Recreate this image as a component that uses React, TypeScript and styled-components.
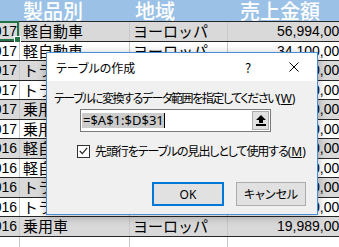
import React, { FC } from "react";
import styled, { createGlobalStyle } from "styled-components";

// Excel sheet with the "create table" dialog on top of it

const GlobalStyle = createGlobalStyle`
  html, body {
    margin: 0;
    padding: 0;
    background: #fff;
  }
  body {
    font-family: "Noto Sans CJK JP", sans-serif;
    color: #000;
  }
`;

const Screen = styled.div`
  position: relative;
  width: 339px;
  height: 247px;
  overflow: hidden;
  background: #fff;
`;

const Sheet = styled.div`
  margin-left: -40px;
  width: 390px;
`;

const COLS = "60px 110px 98px 122px";

const HeaderRow = styled.div`
  display: grid;
  grid-template-columns: ${COLS};
  height: 22px;
  box-sizing: border-box;
  background: #9bc2e6;
  border-bottom: 1px solid #262626;
`;

const HeaderCell = styled.div<{ $indent: number }>`
  padding-left: ${(p) => p.$indent}px;
  font-size: 20px;
  font-weight: 500;
  line-height: 22px;
  color: #fff;
  white-space: nowrap;
`;

const Row = styled.div<{ $shaded: boolean }>`
  position: relative;
  display: grid;
  grid-template-columns: ${COLS};
  height: 19.5px;
  box-sizing: border-box;
  background: ${(p) => (p.$shaded ? "#d9d9d9" : "#fff")};
  border-bottom: 1px solid #262626;
`;

const Cell = styled.div<{ $align?: "left" | "right"; $num?: boolean }>`
  box-sizing: border-box;
  border-right: 1px solid #c8c8c8;
  padding: 0 ${(p) => (p.$align === "right" ? "2px" : "0")} 0
    ${(p) => (p.$align === "right" ? "0" : "3px")};
  text-align: ${(p) => p.$align ?? "left"};
  font-family: ${(p) =>
    p.$num ? '"Liberation Sans", sans-serif' : '"Noto Sans CJK JP", sans-serif'};
  font-size: ${(p) => (p.$num ? "14px" : "15px")};
  line-height: 18px;
  white-space: nowrap;
`;

const ActiveCell = styled.div`
  position: absolute;
  left: 0;
  top: -1px;
  width: 59px;
  height: 19.5px;
  border: 2px solid #217346;
  box-sizing: border-box;

  &::after {
    content: "";
    position: absolute;
    right: -4px;
    bottom: -4px;
    width: 5px;
    height: 5px;
    background: #217346;
    border: 1px solid #fff;
  }
`;

/* ---------- dialog ---------- */

const Dialog = styled.div`
  position: absolute;
  left: 46px;
  top: 52px;
  width: 272px;
  height: 163px;
  box-sizing: border-box;
  border: 1px solid #4a8fd6;
  background: #f0f0f0;
  box-shadow: 0 2px 9px rgba(0, 0, 0, 0.28);
  display: flex;
  flex-direction: column;
  font-family: "Noto Sans CJK JP", sans-serif;
  font-feature-settings: "palt";
  font-size: 12px;
`;

const TitleBar = styled.div`
  display: flex;
  align-items: center;
  height: 28px;
  background: #fff;
`;

const Title = styled.div`
  flex: 1;
  padding-left: 9px;
`;

const TitleButton = styled.div`
  width: 46px;
  height: 100%;
  display: flex;
  align-items: center;
  justify-content: center;
  font-size: 13px;
`;

const Body = styled.div`
  display: flex;
  flex-direction: column;
  padding: 9px 11px 0 7px;
`;

const Label = styled.div<{ $spacing: number }>`
  line-height: 16px;
  letter-spacing: ${(p) => p.$spacing}px;
  white-space: nowrap;
`;

const AccessKey = styled.span`
  letter-spacing: 0;
  font-family: "Noto Sans", "Noto Sans CJK JP", sans-serif;

  u {
    text-decoration: underline;
    text-underline-offset: 1px;
  }
`;

const RangeBox = styled.div`
  display: flex;
  align-items: center;
  margin: 2px 0 0 26px;
  width: 191px;
  height: 23px;
  box-sizing: border-box;
  border: 1px solid #7a7a7a;
  background: #fff;
  padding: 0 1px;
`;

const RangeText = styled.div`
  flex: 1;
  display: flex;
  align-items: center;
  font-family: "Noto Sans", "Noto Sans CJK JP", sans-serif;
  font-size: 13px;
  line-height: 15px;
`;

const Selected = styled.span`
  background: #cccccc;
  padding: 0 0 0 1px;
`;

const Caret = styled.span`
  display: inline-block;
  width: 1px;
  height: 15px;
  background: #000;
`;

const CollapseButton = styled.div`
  width: 17px;
  height: 19px;
  box-sizing: border-box;
  border: 1px solid #adadad;
  background: #e1e1e1;
  display: flex;
  align-items: center;
  justify-content: center;
`;

const CheckRow = styled.label`
  display: flex;
  align-items: center;
  gap: 5px;
  margin: 12px 0 0 23px;
  height: 14px;
  white-space: nowrap;
`;

const CheckBox = styled.span`
  width: 13px;
  height: 13px;
  box-sizing: border-box;
  border: 1px solid #333;
  background: #fff;
  display: flex;
  align-items: center;
  justify-content: center;
`;

const Buttons = styled.div`
  display: flex;
  justify-content: flex-end;
  gap: 12px;
  margin-top: 24px;
`;

const Button = styled.div<{ $primary?: boolean; $w: number }>`
  width: ${(p) => p.$w}px;
  height: 24px;
  box-sizing: border-box;
  border: ${(p) => (p.$primary ? "2px solid #0078d7" : "1px solid #adadad")};
  background: #e1e1e1;
  display: flex;
  align-items: center;
  justify-content: center;
  font-family: "Noto Sans", "Noto Sans CJK JP", sans-serif;
  font-size: 12px;
`;

interface SalesRow {
  year: string;
  product: string;
  region: string;
  sales: string;
}

const rows: SalesRow[] = [
  { year: "2017", product: "軽自動車", region: "ヨーロッパ", sales: "56,994,000" },
  { year: "2017", product: "軽自動車", region: "ヨーロッパ", sales: "34,100,000" },
  { year: "2017", product: "トラック", region: "ヨーロッパ", sales: "42,300,000" },
  { year: "2017", product: "トラック", region: "ヨーロッパ", sales: "28,500,000" },
  { year: "2017", product: "乗用車", region: "ヨーロッパ", sales: "61,200,000" },
  { year: "2017", product: "乗用車", region: "ヨーロッパ", sales: "47,800,000" },
  { year: "2016", product: "軽自動車", region: "ヨーロッパ", sales: "39,400,000" },
  { year: "2016", product: "軽自動車", region: "ヨーロッパ", sales: "22,600,000" },
  { year: "2016", product: "トラック", region: "ヨーロッパ", sales: "15,700,000" },
  { year: "2016", product: "トラック", region: "ヨーロッパ", sales: "11,000,000" },
  { year: "2016", product: "乗用車", region: "ヨーロッパ", sales: "19,989,000" },
  { year: "", product: "", region: "", sales: "" },
];

const UpArrow: FC = () => (
  <svg width="10" height="11" viewBox="0 0 10 11">
    <polygon points="5,0 10,5 7,5 7,8 3,8 3,5 0,5" fill="#000" />
    <rect x="0" y="9" width="10" height="2" fill="#000" />
  </svg>
);

const CloseIcon: FC = () => (
  <svg width="10" height="10" viewBox="0 0 10 10">
    <path d="M0.5 0.5 L9.5 9.5 M9.5 0.5 L0.5 9.5" stroke="#000" strokeWidth="1" />
  </svg>
);

const Check: FC = () => (
  <svg width="9" height="8" viewBox="0 0 9 8">
    <path d="M0.8 4 L3.3 6.6 L8.2 0.8" stroke="#222" strokeWidth="1.2" fill="none" />
  </svg>
);

export default function App() {
  return (
    <Screen>
      <GlobalStyle />
      <Sheet>
        <HeaderRow>
          <HeaderCell $indent={0} />
          <HeaderCell $indent={3}>製品別</HeaderCell>
          <HeaderCell $indent={5}>地域</HeaderCell>
          <HeaderCell $indent={12}>売上金額</HeaderCell>
        </HeaderRow>
        {rows.map((row, index) => (
          <Row key={index} $shaded={index % 2 === 0}>
            <Cell $align="right" $num>{row.year}</Cell>
            <Cell>{row.product}</Cell>
            <Cell>{row.region}</Cell>
            <Cell $align="right" $num>{row.sales}</Cell>
            {index === 0 && <ActiveCell />}
          </Row>
        ))}
      </Sheet>

      <Dialog>
        <TitleBar>
          <Title>テーブルの作成</Title>
          <TitleButton>?</TitleButton>
          <TitleButton>
            <CloseIcon />
          </TitleButton>
        </TitleBar>
        <Body>
          <Label $spacing={-1.45}>
            テーブルに変換するデータ範囲を指定してください
            <AccessKey>
              (<u>W</u>)
            </AccessKey>
          </Label>
          <RangeBox>
            <RangeText>
              <Selected>=$A$1:$D$31</Selected>
              <Caret />
            </RangeText>
            <CollapseButton>
              <UpArrow />
            </CollapseButton>
          </RangeBox>
          <CheckRow>
            <CheckBox>
              <Check />
            </CheckBox>
            <Label $spacing={-1.1}>
              先頭行をテーブルの見出しとして使用する
              <AccessKey>
                (<u>M</u>)
              </AccessKey>
            </Label>
          </CheckRow>
          <Buttons>
            <Button $primary $w={72}>OK</Button>
            <Button $w={70}>キャンセル</Button>
          </Buttons>
        </Body>
      </Dialog>
    </Screen>
  );
}
